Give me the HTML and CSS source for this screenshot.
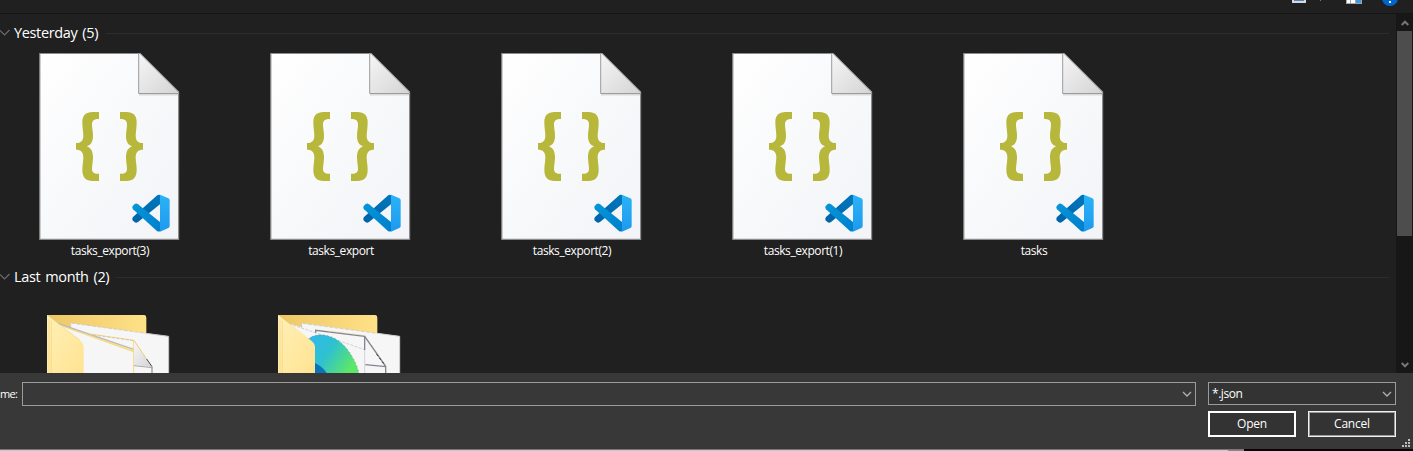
FILE: index.html
```
<!DOCTYPE html>
<html lang="en">
<head>
<meta charset="utf-8">
<title>Open</title>
<link rel="stylesheet" href="styles.css">
</head>
<body>
<svg class="defs" width="0" height="0" aria-hidden="true">
  <defs>
    <linearGradient id="paper" x1="0" y1="0" x2="1" y2="1"><stop offset="0" stop-color="#fff"/><stop offset=".5" stop-color="#f8f9fb"/><stop offset="1" stop-color="#f3f4f7"/></linearGradient>
    <linearGradient id="fold" x1="0" y1="0" x2="1" y2="1"><stop offset="0" stop-color="#f6f6f7"/><stop offset="1" stop-color="#d4d4d5"/></linearGradient>
    <linearGradient id="back" x1="0" y1="0" x2="1" y2="0"><stop offset="0" stop-color="#edc765"/><stop offset="1" stop-color="#ffe187"/></linearGradient>
    <linearGradient id="front" x1="0" y1="0" x2="1" y2="1"><stop offset="0" stop-color="#fff0b8"/><stop offset="1" stop-color="#ffe391"/></linearGradient>
    <linearGradient id="edge" x1="0" y1="0" x2="1" y2=".5"><stop offset="0" stop-color="#30b8ee"/><stop offset=".5" stop-color="#2fc1cf"/><stop offset="1" stop-color="#5be66c"/></linearGradient>
    <linearGradient id="vsdark" x1="0" y1="1" x2="1" y2="0"><stop offset="0" stop-color="#0062a8"/><stop offset="1" stop-color="#0077bd"/></linearGradient>
    <linearGradient id="vsmid" x1="0" y1="0" x2="1" y2="1"><stop offset="0" stop-color="#0596d9"/><stop offset="1" stop-color="#007fcc"/></linearGradient>
    <linearGradient id="vslight" x1="0" y1="0" x2="0" y2="1"><stop offset="0" stop-color="#2ab3f7"/><stop offset="1" stop-color="#1f99ee"/></linearGradient>
    <path id="brace" d="M237 36H218C197 36 187 46 187 66C187 85 190 96 190 107C190 122 183 129 168 129V149C183 149 190 157 190 171C190 184 187 196 187 210C187 232 197 243 218 243H237V221C222 222 216 217 216 207C216 197 219 185 219 172C219 153 212 143 200 139C212 135 219 126 219 107C219 95 216 84 216 74C216 61 222 57 237 57Z"/>
    <symbol id="json-file" viewBox="0 0 141 189">
      <path d="M.8 1.500H101L139.600 40V187.300H.8Z" fill="url(#paper)" stroke="#8b8b8b" stroke-width="1.200"/>
      <path d="M100 42.500H139" stroke="#000" stroke-opacity=".12" stroke-width="2"/>
      <path d="M99.700 1.500V41.500H139.500V40L101 1.500Z" fill="url(#fold)" stroke="#9c9c9c" stroke-width="1"/>
      <g transform="translate(-19 48) scale(.33333)">
        <use href="#brace" fill="#b7b73b"/>
        <use href="#brace" fill="#b7b73b" transform="translate(537 0) scale(-1 1)"/>
        <path d="M410 287Q415 283 420 285V313L354 366Q349 370 344 367L338 361Q335 356 339 351Z" fill="url(#vsdark)"/>
        <path d="M410 392Q415 396 420 394V366L354 313Q349 309 344 312L338 318Q335 323 339 328Z" fill="url(#vsmid)"/>
        <path d="M420 284L445 295Q449 297 449 301V378Q449 382 445 384L420 395Z" fill="url(#vslight)"/>
      </g>
    </symbol>
  </defs>
</svg>
<main class="dialog">
  <header class="toolbar">
    <svg class="tools" width="143" height="13" viewBox="0 0 143 13">
      <path d="M22 0H36V3H22Z" fill="#d8d8d8"/><path d="M24 0H34V1H24Z" fill="#4e86c4"/>
      <path d="M50 0H51V1H50Z" fill="#777"/>
      <path d="M76 0H92V4H76Z" fill="#a5a5a5"/><path d="M77 0H80V3H77ZM81 0H85V3H81Z" fill="#fff"/><path d="M86 0H91V3H86Z" fill="#3a9be5"/>
      <circle cx="120" cy="-2" r="8" fill="#0066c9"/><path d="M119 1H121V3H119Z" fill="#fff"/>
    </svg>
  </header>
  <div class="browser">
    <div class="files">
      <section class="group">
        <div class="heading"><svg class="chevron" width="10" height="8" viewBox="0 0 10 8"><path d="M0 1.500L4.500 6L9.500 1"/></svg><span class="title yesterday">Yesterday (5)</span><i class="rule"></i></div>
        <div class="grid">
          <figure class="file"><svg class="doc"><use href="#json-file"/></svg><figcaption>tasks_export(3)</figcaption></figure>
          <figure class="file"><svg class="doc"><use href="#json-file"/></svg><figcaption>tasks_export</figcaption></figure>
          <figure class="file"><svg class="doc"><use href="#json-file"/></svg><figcaption>tasks_export(2)</figcaption></figure>
          <figure class="file"><svg class="doc"><use href="#json-file"/></svg><figcaption>tasks_export(1)</figcaption></figure>
          <figure class="file"><svg class="doc"><use href="#json-file"/></svg><figcaption>tasks</figcaption></figure>
        </div>
      </section>
      <section class="group">
        <div class="heading"><svg class="chevron" width="10" height="8" viewBox="0 0 10 8"><path d="M0 1.500L4.500 6L9.500 1"/></svg><span class="title">Last month (2)</span><i class="rule"></i></div>
        <div class="grid folders">
          <div class="file"><svg class="folder" viewBox="138 162 372 177">
            <path d="M141 165H433Q439 166 439 173V339H141Z" fill="url(#back)"/>
            <path d="M174 190L212 204V189L506 229V339H240V240Z" fill="#f6f6f7"/>
            <path d="M212 204V189L438 220" fill="none" stroke="#bfc0c4" stroke-width="2" stroke-dasharray="12 4"/>
            <path d="M438 220L506 229V339" fill="none" stroke="#c5c5c8" stroke-width="3"/>
            <path d="M184 196L401 274" stroke="#f8dc80" stroke-width="6"/>
            <path d="M174 190L401 268" stroke="#b9babf" stroke-width="4"/>
            <path d="M272 222L401 241" stroke="#f5d878" stroke-width="3"/><path d="M280 225L401 242" stroke="#b9babf" stroke-width="2" stroke-dasharray="9 5"/>
            <path d="M401 241V339" stroke="#f4d984" stroke-width="3"/>
            <path d="M402 242L456 321L402 316Z" fill="url(#fold)"/>
            <path d="M402 241L440 297" stroke="#efcd70" stroke-width="3"/><path d="M440 297L456 320" fill="none" stroke="#44444a" stroke-width="3"/><path d="M456 320V339" stroke="#999" stroke-width="4"/><path d="M402 317L456 323" stroke="#aaa" stroke-width="3"/>
            <path d="M141 165L241 242Q251 250 251 262V339H141Z" fill="url(#front)"/>
            <path d="M147 177V339M154 182V339" stroke="#f4d579" stroke-width="2"/>
          </svg></div>
          <div class="file"><svg class="folder" viewBox="81 42 372 177">
            <path d="M84 45H376Q382 46 382 53V219H84Z" fill="url(#back)"/>
            <path d="M117 70L155 82V69L449 109V219H180V120Z" fill="#f6f6f7"/>
            <path d="M155 83V70L382 100" fill="none" stroke="#bfc0c4" stroke-width="2" stroke-dasharray="12 4"/>
            <path d="M382 100L449 109V219" fill="none" stroke="#d0d0d3" stroke-width="3"/>
            <path d="M117 71L344 149" stroke="#b9babf" stroke-width="2" stroke-dasharray="9 4"/>
            <path d="M175 117C205 92 260 105 293 149Q318 182 327 219H180Z" fill="url(#edge)"/>
            <path d="M175 117C205 92 260 105 293 149Q318 182 327 219" fill="none" stroke="#8b7350" stroke-width="2" stroke-dasharray="3 9"/>
            <path d="M190 187Q215 197 230 219H190Z" fill="#0b73bc"/>
            <path d="M197 98V91L344 109V150" fill="none" stroke="#858592" stroke-width="4"/><path d="M344 150V219" stroke="#d3d3d6" stroke-width="3"/>
            <path d="M235 93L344 106L385 166" fill="none" stroke="#f3d381" stroke-width="2" stroke-dasharray="10 8"/>
            <path d="M344 109L407 199V219M346 194L407 200" fill="none" stroke="#85858f" stroke-width="4"/>
            <path d="M380 163L404 195" stroke="#333" stroke-width="3" stroke-dasharray="6 8"/>
            <path d="M84 45L184 122Q195 130 195 142V219H84Z" fill="url(#front)"/>
            <path d="M90 57V219M97 62V219" stroke="#f4d579" stroke-width="2"/>
          </svg></div>
        </div>
      </section>
    </div>
    <div class="scrollbar">
      <svg width="8" height="6" viewBox="0 0 8 6"><path d="M.7 5L4 1.700L7.300 5"/></svg>
      <div class="track"><div class="thumb"></div></div>
      <svg width="8" height="6" viewBox="0 0 8 6"><path d="M.7 1L4 4.300L7.300 1"/></svg>
    </div>
  </div>
  <footer class="footer">
    <span class="name-label">me:</span>
    <div class="combo name"><svg class="drop" width="10" height="6" viewBox="0 0 10 6"><path d="M1 1L5 5L9 1"/></svg></div>
    <div class="actions">
      <div class="combo type"><span>*.json</span><svg class="drop" width="10" height="6" viewBox="0 0 10 6"><path d="M1 1L5 5L9 1"/></svg></div>
      <div class="buttons"><button class="button default">Open</button><button class="button">Cancel</button></div>
    </div>
    <svg class="grip" width="8" height="8" viewBox="0 0 8 8"><path d="M6 0h2v2h-2zM3 3h2v2h-2zM6 3h2v2h-2zM0 6h2v2h-2zM3 6h2v2h-2zM6 6h2v2h-2z" fill="#bdbdbd"/></svg>
  </footer>
  <div class="underlay"><i class="light"></i><i class="mid"></i><i class="dark"></i></div>
</main>
</body>
</html>
```
FILE: styles.css
```
* { box-sizing: border-box; }
body { margin: 0; overflow: hidden; background: #202020; color: #fff; font: 12px/16px "Open Sans", "Noto Sans", sans-serif; }
.defs { display: block; position: absolute; }
.dialog { display: flex; flex-direction: column; width: 1413px; height: 451px; }
.toolbar { display: flex; height: 14px; padding-left: 1270px; border-bottom: 1px solid #151515; }
.tools { display: block; flex: none; }
.browser { display: flex; height: 359px; }
.files { width: 1396px; height: 359px; overflow: hidden; }
.group { height: 244px; padding-top: 8px; }
.heading { display: flex; align-items: center; height: 22px; }
.chevron { flex: none; fill: none; stroke: #6a6a6a; stroke-width: 1.2; }
.title { width: 95px; margin-left: 4px; font-size: 14.5px; line-height: 22px; letter-spacing: -.35px; word-spacing: 1.5px; white-space: nowrap; }
.yesterday { width: 85px; }
.rule { height: 1px; margin-left: 7px; margin-right: 7px; flex: 1; background: #2d2d2d; }
.grid { display: flex; gap: 90px; padding: 8px 0 0 39px; }
.file { width: 141px; margin: 0; flex: none; }
.doc { display: block; width: 141px; height: 189px; }
figcaption { margin-top: 2px; padding-left: 1px; text-align: center; letter-spacing: -.42px; }
.folders { padding-top: 26px; padding-left: 46px; }
.folder { display: block; width: 124px; height: 59px; }
.scrollbar { display: flex; flex-direction: column; align-items: center; width: 17px; padding: 6px 0 5px; background: #171717; }
.scrollbar svg { flex: none; fill: none; stroke: #777; stroke-width: 2; }
.track { flex: 1; width: 15px; padding-top: 5px; }
.thumb { height: 205px; background: #4d4d4d; }
.footer { display: flex; height: 76px; padding-top: 9px; background: #383838; }
.name-label { width: 22px; padding-top: 4px; font-size: 11px; letter-spacing: -.7px; }
.combo { display: flex; align-items: center; border: 1px solid #9b9b9b; }
.drop { margin-left: auto; fill: none; stroke: #b0b0b0; stroke-width: 1.3; }
.name { width: 1174px; height: 24px; padding-right: 3px; }
.actions { width: 188px; margin-left: 12px; }
.type { height: 23px; padding: 0 3px; background: #333; letter-spacing: -.45px; }
.buttons { display: flex; justify-content: space-between; margin-top: 6px; }
.button { width: 88px; height: 26px; padding: 0; border: 1px solid #f0f0f0; background: #333; color: #fff; font: inherit; letter-spacing: -.2px; box-shadow: inset 0 0 0 1px #999; }
.default { border: 2px solid #fff; box-shadow: none; }
.grip { margin: 57px 0 0 6px; }
.underlay { display: flex; height: 2px; border-top: 1px solid #777; }
.light { width: 1228px; background: #c9c9c9; }
.mid { width: 16px; background: #888; }
.dark { flex: 1; margin-top: -1px; background: #050505; }
```
